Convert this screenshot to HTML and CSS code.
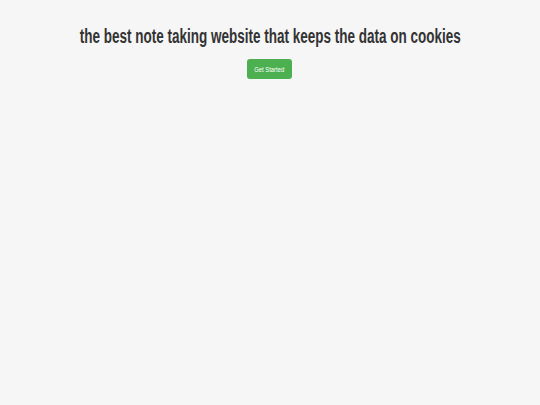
FILE: index.html
```html
<!DOCTYPE html>
<html><head><link rel="stylesheet" href="styles.css"></head>
<body>
<main class="hero">
<h1 class="title">the best note taking website that keeps the data on cookies</h1>
<button class="cta"><span class="cta-label">Get Started</span></button>
</main>
</body></html>
```
FILE: styles.css
```css
html,body{margin:0;padding:0;}
body{background:#f6f6f6;font-family:"Liberation Sans",Arial,sans-serif;color:#333;}
.hero{display:flex;flex-direction:column;align-items:center;padding-top:24px;}
.title{margin:0;font-size:20px;font-weight:bold;line-height:24px;color:#333;white-space:nowrap;transform:scaleX(0.675);}
.cta{margin-top:11px;margin-right:1px;width:45px;height:20px;border:0;border-radius:3px;background:#4caf50;color:#fff;font-family:inherit;font-size:7.5px;padding:0;display:flex;align-items:center;justify-content:center;}
.cta-label{display:inline-block;transform:scaleX(0.78);white-space:nowrap;}
```
